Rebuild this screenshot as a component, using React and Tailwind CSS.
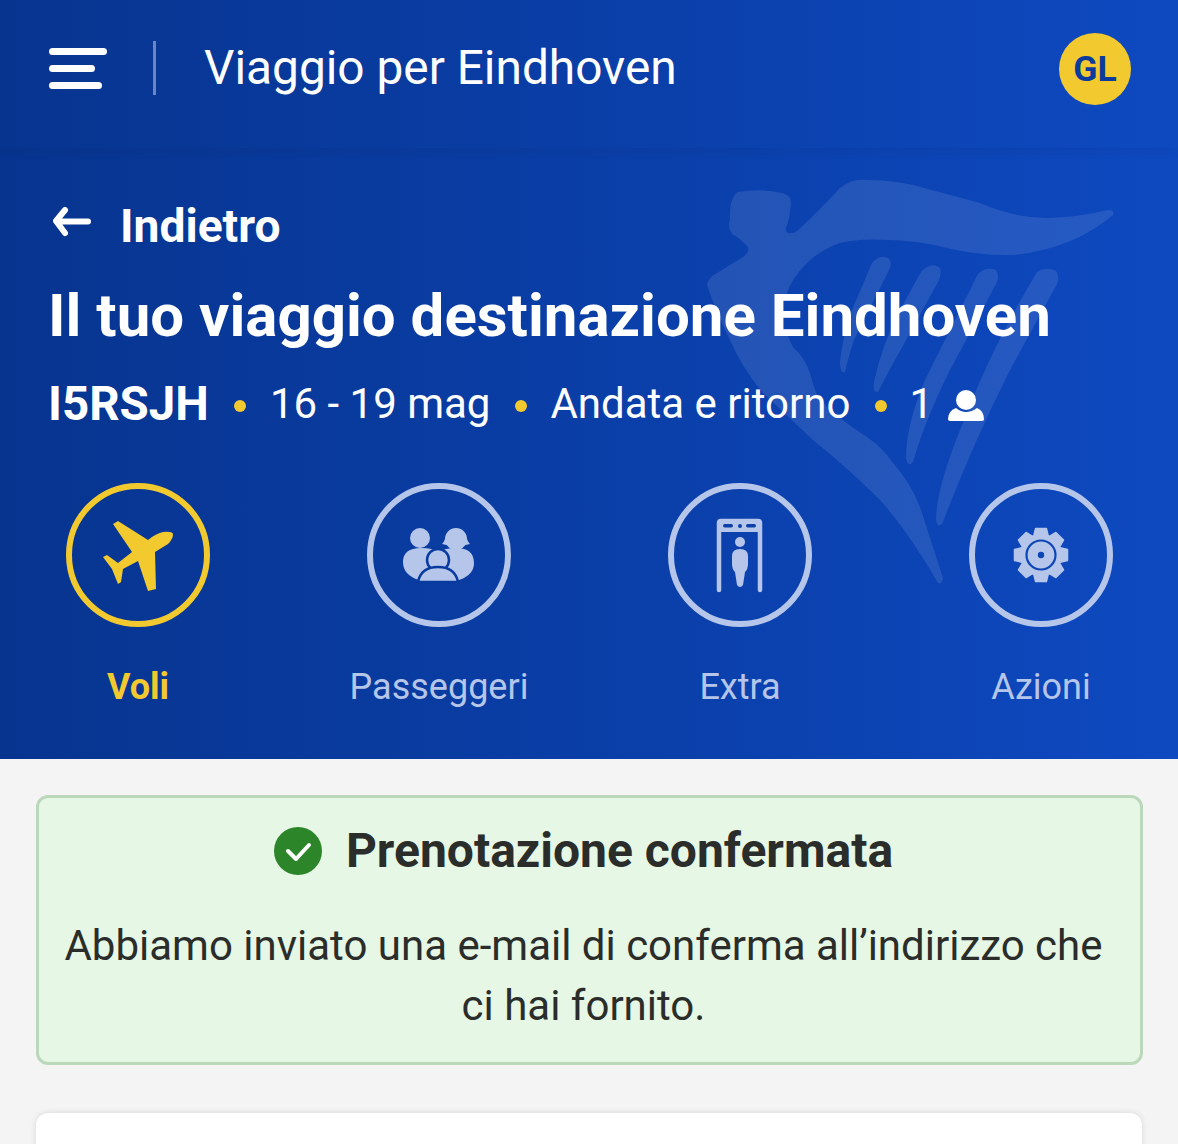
import React from "react";

const gearPath = () => {
  // 8 toothed gear around the (1041,555) centre
  const pts = [];
  for (let i = 0; i < 8; i++) {
    const a = (i * Math.PI) / 4 - Math.PI / 2;
    const step = [
      [-0.36, 20.5],
      [-0.2, 27],
      [0.2, 27],
      [0.36, 20.5],
    ];
    step.forEach(([d, r]) => {
      pts.push(`${(1041 + r * Math.cos(a + d)).toFixed(1)} ${(555 + r * Math.sin(a + d)).toFixed(1)}`);
    });
  }
  return `M${pts.join("L")}Z`;
};

const PlaneIcon = () => (
  <svg viewBox="100 515 76 76" className="w-[76px] h-[76px]" fill="#F2C92F">
    <path d="M173 532Q172 529 163 530Q155 532 148 538L118 519L113 522L132 550L118 561L107 553L103 555L112 567L118 582L121 580L123 567L138 559L148 589L156 587L155 550L168 542Q173 537 173 532Z" />
  </svg>
);

const FamilyIcon = () => (
  <svg viewBox="400 525 76 60" className="w-[76px] h-[60px]" fill="#B5C6EA">
    <circle cx="419" cy="538" r="10" />
    <circle cx="455" cy="539" r="11" />
    <path d="M444 539Q443 542 441 544Q448 546 455 546Q463 546 469 544Q467 542 466 539Z" />
    <path d="M402 562Q402 548 420 548Q432 548 438 552Q444 548 455 548Q473 548 473 563Q473 575 458 580L418 580Q402 575 402 562Z" />
    <circle cx="437" cy="560" r="11" stroke="#093B9F" strokeWidth="2.5" />
    <path d="M417 582Q420 567 437 567Q454 567 457 582Z" stroke="#093B9F" strokeWidth="2.5" />
  </svg>
);

const GateIcon = () => (
  <svg viewBox="715 516 52 78" className="w-[52px] h-[78px]">
    <path d="M720 590V523Q720 521 722 521H759Q761 521 761 523V590" fill="none" stroke="#B5C6EA" strokeWidth="4.5" strokeLinecap="round" />
    <rect x="720" y="521" width="41" height="11" fill="#B5C6EA" />
    <rect x="724" y="524" width="10" height="3.5" rx="1.7" fill="#0B40A8" />
    <circle cx="741" cy="526" r="2" fill="#0B40A8" />
    <rect x="747" y="524" width="10" height="3.5" rx="1.7" fill="#0B40A8" />
    <circle cx="741" cy="542" r="5" fill="#B5C6EA" />
    <path d="M733 556Q733 549 741 549Q749 549 749 556L749 564Q749 569 746 572L744 585Q741 589 738 585L736 572Q733 569 733 564Z" fill="#B5C6EA" />
  </svg>
);

const GearIcon = () => (
  <svg viewBox="1011 525 60 60" className="w-[60px] h-[60px]">
    <path d={gearPath()} fill="#B5C6EA" stroke="#B5C6EA" strokeWidth="1.5" strokeLinejoin="round" />
    <circle cx="1041" cy="555" r="14.5" fill="none" stroke="#0D45B5" strokeWidth="2.2" />
    <circle cx="1041" cy="555" r="3.2" fill="#0D45B5" />
  </svg>
);

const HarpLogo = () => (
  <svg viewBox="700 170 430 420" className="absolute left-[700px] top-[170px] w-[430px] h-[420px]" fill="#fff" fillOpacity="0.1">
    <path d="M738 192Q760 188 782 193Q791 195 791 203Q790 218 786 228Q785 236 796 232Q815 215 840 188Q852 178 867 180Q890 180 913 185L980 203Q1015 218 1047 218Q1080 217 1108 210Q1115 210 1113 215Q1095 230 1073 240Q1045 252 1013 255Q980 256 947 248Q915 240 887 240Q860 238 840 243Q820 250 807 263Q792 278 787 293Q778 306 780 320L793 347Q805 358 810 373Q814 390 820 400Q840 420 867 437Q883 448 893 463Q910 482 920 507L943 578Q942 585 938 583Q926 562 913 543Q898 520 880 500Q850 470 813 440L763 393Q742 368 730 340Q716 312 707 285Q708 278 717 273L743 257Q750 252 748 247Q740 238 732 234Q727 226 730 220Q729 198 738 192Z" />
    <path d="M872 263Q880 254 888 258Q893 262 889 270L854 340Q848 358 845 372Q840 374 840 362Q842 340 852 310Z" />
    <path d="M921 272Q930 262 939 267Q943 272 938 282L895 360Q884 380 878 392Q872 392 874 382Q882 345 900 310Z" />
    <path d="M978 274Q986 266 996 270Q1000 276 996 284L950 370Q925 420 913 462Q908 468 906 458Q906 425 925 380Z" />
    <path d="M1037 272Q1046 266 1056 271Q1060 276 1057 284L1010 370Q970 450 943 522Q938 530 936 520Q936 490 960 430Q990 350 1037 272Z" />
  </svg>
);

const TripTab = ({ label, active, children }) => (
  <div className="flex flex-col items-center w-36">
    <div className={`w-36 h-36 rounded-full border-[6px] flex items-center justify-center ${active ? "border-[#F2C92F]" : "border-[#B5C6EA]"}`}>
      {children}
    </div>
    <span className={`mt-[39px] text-[36px] leading-[42px] whitespace-nowrap ${active ? "font-bold text-[#F2C92F]" : "text-[#B5C6EA]"}`}>
      {label}
    </span>
  </div>
);

const Dot = () => <span className="block w-3 h-3 rounded-full bg-[#F2C92F] shrink-0 mt-1" />;

export default function App() {
  return (
    <div className="h-[1144px] overflow-hidden bg-[#F4F4F4] font-['Roboto',sans-serif]">
      <div className="relative h-[759px] bg-linear-to-r from-[#07348F] to-[#0E49C0] overflow-hidden">
        <header className="relative z-10 h-[148px] flex items-center pl-[49px] pr-[47px] pb-3 shadow-[0_4px_10px_rgba(0,0,0,0.05)]">
          <div className="flex flex-col gap-[10px] w-[58px]">
            <span className="block h-[7px] w-[58px] rounded-full bg-white" />
            <span className="block h-[7px] w-[46px] rounded-full bg-white" />
            <span className="block h-[7px] w-[53px] rounded-full bg-white" />
          </div>
          <div className="ml-[46px] w-[3px] h-[54px] bg-white/40" />
          <h1 className="ml-[48px] text-[47.8px] leading-[56px] text-white">Viaggio per Eindhoven</h1>
          <div className="ml-auto mt-[2px] pt-[2px] w-[72px] h-[72px] rounded-full bg-[#F2C92F] flex items-center justify-center text-[35.5px] font-bold text-[#0B3B9C]">
            GL
          </div>
        </header>

        <HarpLogo />

        <section className="relative pl-[48px] pt-[50px]">
          <div className="flex items-center h-[56px]">
            <svg viewBox="0 0 40 30" className="w-[40px] h-[30px] ml-[3px] -mt-[8px]" fill="none" stroke="#fff" strokeWidth="6" strokeLinecap="round" strokeLinejoin="round">
              <path d="M14 3L5 14L14 26M6 14.5H37" />
            </svg>
            <span className="ml-[29px] text-[46.2px] leading-[50px] font-bold text-white -mt-[1px]">Indietro</span>
          </div>
          <h2 className="mt-[28px] text-[60px] leading-[68px] font-bold text-white whitespace-nowrap">
            Il tuo viaggio destinazione Eindhoven
          </h2>
          <div className="mt-[28px] h-[52px] flex items-center text-[42px] leading-[52px] text-white whitespace-nowrap">
            <span className="text-[47.5px] font-bold">I5RSJH</span>
            <span className="ml-[25px]"><Dot /></span>
            <span className="ml-[24px]">16 - 19 mag</span>
            <span className="ml-[25px]"><Dot /></span>
            <span className="ml-[23px]">Andata e ritorno</span>
            <span className="ml-[25px]"><Dot /></span>
            <span className="ml-[22px]">1</span>
            <svg viewBox="946 388 40 32" className="w-[40px] h-[32px] ml-[13px] mt-[2px]" fill="#fff">
              <circle cx="966" cy="399" r="10" />
              <path d="M948 418Q948 410 956 407Q961 411 966 411Q972 411 977 407Q984 410 984 418Q984 420 982 420H950Q948 420 948 418Z" />
            </svg>
          </div>
          <div className="mt-[53px] flex justify-between pl-[18px] pr-[65px]">
            <TripTab label="Voli" active><PlaneIcon /></TripTab>
            <TripTab label="Passeggeri"><FamilyIcon /></TripTab>
            <TripTab label="Extra"><GateIcon /></TripTab>
            <TripTab label="Azioni"><GearIcon /></TripTab>
          </div>
        </section>
      </div>

      <div className="ml-9 mr-[35px] mt-9 h-[270px] rounded-xl border-[3px] border-[#BBD8BB] bg-[#E6F7E6] text-[#2B2D2B] flex flex-col items-center pr-3">
        <div className="mt-[27px] flex items-center h-[52px]">
          <svg viewBox="0 0 48 48" className="w-12 h-12">
            <circle cx="24" cy="24" r="24" fill="#2C8529" />
            <path d="M14 24L22 32L35 18" fill="none" stroke="#fff" strokeWidth="4" strokeLinecap="round" strokeLinejoin="round" />
          </svg>
          <span className="ml-[24px] text-[48px] leading-[52px] font-bold">Prenotazione confermata</span>
        </div>
        <p className="mt-[39px] px-6 text-center text-[42px] leading-[60px]">
          Abbiamo inviato una e-mail di conferma all’indirizzo che ci hai fornito.
        </p>
      </div>

      <div className="mx-9 mt-12 h-20 rounded-t-xl bg-white shadow-[0_0_6px_rgba(0,0,0,0.12)]" />
    </div>
  );
}
